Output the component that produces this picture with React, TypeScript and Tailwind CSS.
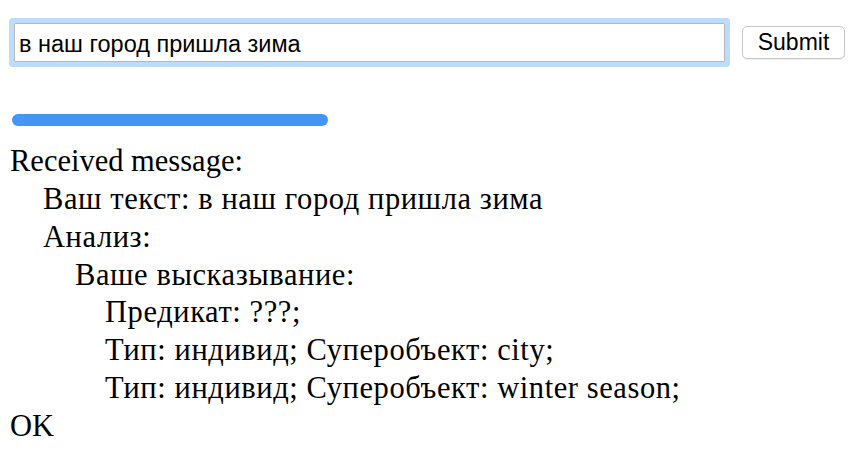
import React from 'react';

const lines: { text: string; level: number; cyr: boolean }[] = [
  { text: 'Received message:', level: 0, cyr: false },
  { text: 'Ваш текст: в наш город пришла зима', level: 1, cyr: true },
  { text: 'Анализ:', level: 1, cyr: true },
  { text: 'Ваше высказывание:', level: 2, cyr: true },
  { text: 'Предикат: ???;', level: 3, cyr: true },
  { text: 'Тип: индивид; Суперобъект: city;', level: 3, cyr: true },
  { text: 'Тип: индивид; Суперобъект: winter season;', level: 3, cyr: true },
  { text: 'OK', level: 0, cyr: false },
];

const indent = ['pl-0', 'pl-[33px]', 'pl-[65px]', 'pl-[95px]'];

export default function App() {
  return (
    <div className="min-h-screen bg-white pl-[10px] pt-[23px]">
      {/* Form */}
      <div className="flex items-center">
        <input
          defaultValue="в наш город пришла зима"
          className="ml-[4px] h-[39px] w-[711px] rounded-[1px] border border-[#b8b8b8] px-[4px] pt-[4px] text-[23.5px] text-black outline-none ring-[5px] ring-[#bddcfb] font-['Liberation_Sans',Arial,sans-serif]"
        />
        <button className="ml-[17px] h-[33px] w-[103px] rounded-[5px] border border-[#c6c6c6] bg-white text-[23px] leading-none text-black shadow-[0_1px_1px_rgba(0,0,0,0.06)] font-['Liberation_Sans',Arial,sans-serif]">
          Submit
        </button>
      </div>

      {/* Progress */}
      <div className="ml-[2px] mt-[52px] h-[12px] w-[316px] rounded-full bg-[#4596f3]" />

      {/* Output */}
      <div className="mt-[17px] text-[30.5px] leading-[37.86px] text-black font-['Liberation_Serif','Times_New_Roman',serif]">
        {lines.map((l, i) => (
          <div key={i} className={`${indent[l.level]} ${l.cyr ? 'tracking-[0.58px]' : ''}`}>
            {l.text}
          </div>
        ))}
      </div>
    </div>
  );
}
